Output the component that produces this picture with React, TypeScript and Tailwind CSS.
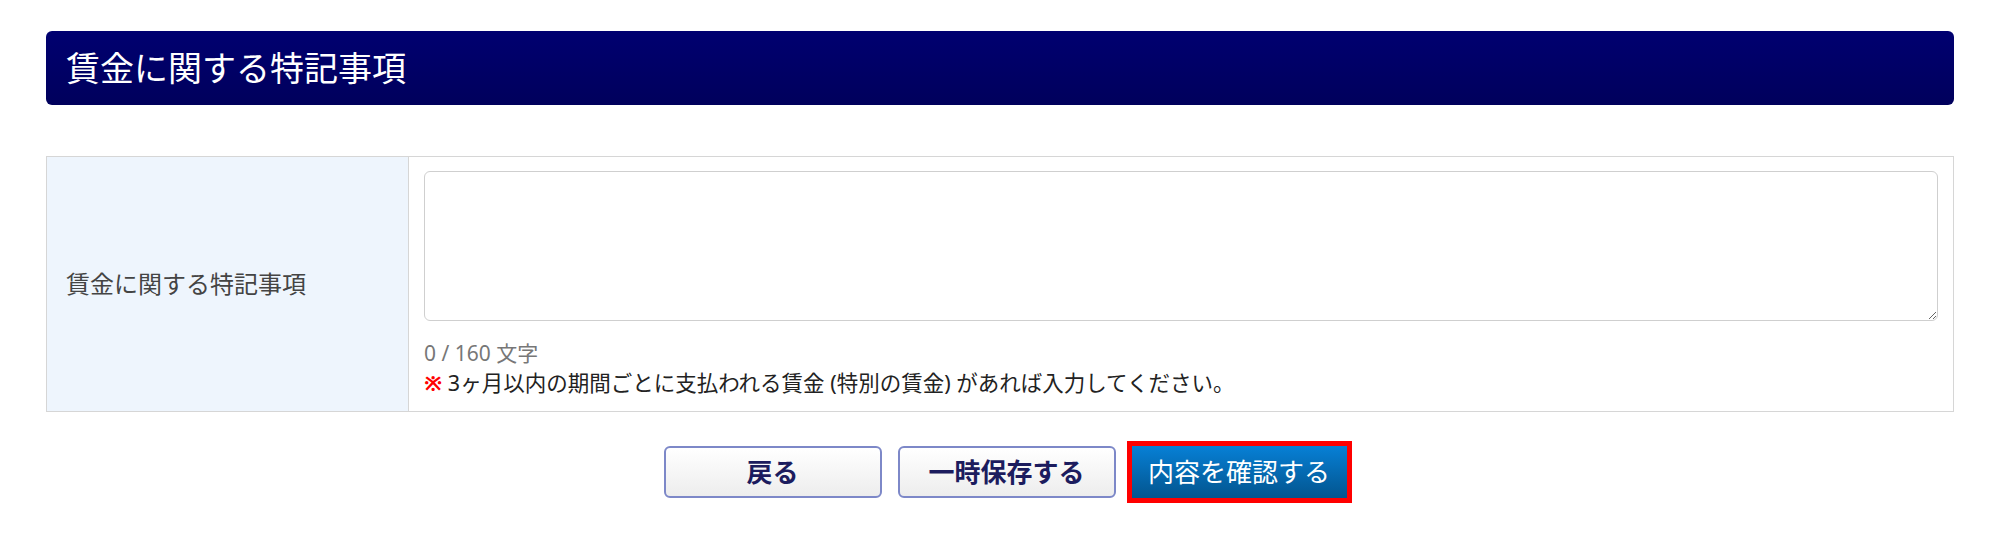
import React, { useState } from 'react';

const FONT = { fontFamily: '"Noto Sans", "Noto Sans CJK JP", sans-serif' };

export default function App() {
  const [text, setText] = useState('');
  const max = 160;

  return (
    <div className="min-h-[536px] bg-white px-[46px] pt-[31px]" style={FONT}>
      <div className="flex h-[74px] items-center rounded-[6px] bg-gradient-to-b from-[#000070] to-[#00005c] pl-[20px]">
        <h1 className="text-[34px] font-normal leading-none text-white">賃金に関する特記事項</h1>
      </div>

      <table className="mt-[51px] w-full border-collapse border border-[#d6d6d6]">
        <tbody>
          <tr>
            <th className="w-[362px] border border-[#d6d6d6] bg-[#eef5fd] px-[19px] text-left align-middle text-[24px] font-normal text-[#444]">
              賃金に関する特記事項
            </th>
            <td className="border border-[#d6d6d6] px-[15px] pt-[14px] pb-[13px] align-top">
              <textarea
                value={text}
                maxLength={max}
                onChange={(e) => setText(e.target.value)}
                className="block h-[150px] w-full rounded-[6px] border border-[#cfcfcf] bg-white px-3 py-2 text-[20px] outline-none"
              />
              <p className="mt-[17px] text-[21px] leading-[30px] text-[#777]">
                {text.length} / {max} 文字
              </p>
              <p className="text-[21.5px] leading-[30px] text-[#222]">
                <span className="font-bold text-[#ff0000]">※</span> 3ヶ月以内の期間ごとに支払われる賃金 (特別の賃金) があれば入力してください。
              </p>
            </td>
          </tr>
        </tbody>
      </table>

      <div className="mt-[34px] flex justify-center gap-[16px] pl-[10px]">
        <button className="h-[52px] w-[218px] rounded-[6px] border-2 border-[#7d88c8] bg-gradient-to-b from-white to-[#ededed] text-[26px] font-bold text-[#1c1c5e]">
          戻る
        </button>
        <button className="h-[52px] w-[218px] rounded-[6px] border-2 border-[#7d88c8] bg-gradient-to-b from-white to-[#ededed] text-[26px] font-bold text-[#1c1c5e]">
          一時保存する
        </button>
        <button className="h-[52px] w-[215px] bg-gradient-to-b from-[#0780d6] to-[#03558f] text-[26px] text-white outline-[5px] outline-solid outline-[#ff0000]">
          内容を確認する
        </button>
      </div>
    </div>
  );
}
